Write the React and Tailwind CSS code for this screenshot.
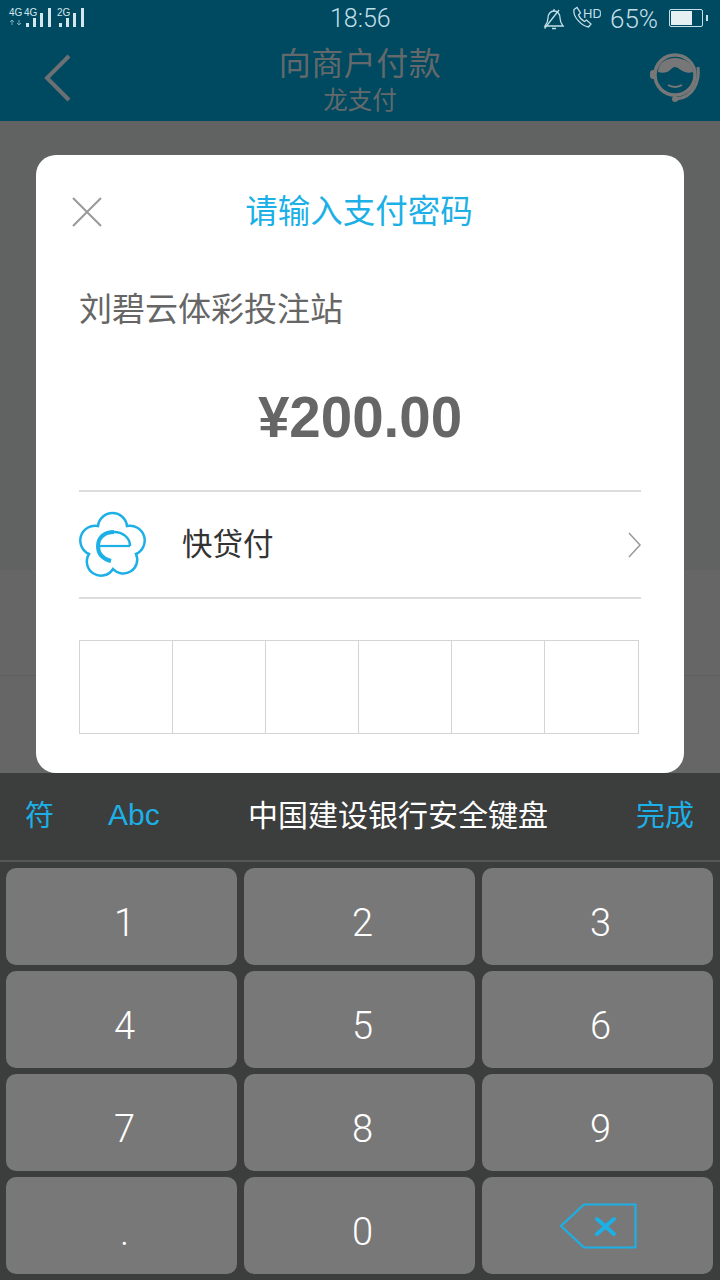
const font = { fontFamily: '"Liberation Sans", "Noto Sans CJK SC", sans-serif' }
const thinFont = { fontFamily: 'Roboto, "Liberation Sans", sans-serif' }

const KEYS = ['1', '2', '3', '4', '5', '6', '7', '8', '9', '.', '0']

function SignalBars({ x }) {
  return (
    <>
      <rect x={x} y="23" width="3" height="4" />
      <rect x={x + 7} y="18" width="3" height="9" />
      <rect x={x + 14} y="13" width="3" height="14" />
      <rect x={x + 22} y="8" width="3" height="19" />
    </>
  )
}

function StatusBar() {
  return (
    <div className="relative h-10 w-full text-[#c3dfe8]">
      <svg className="absolute left-0 top-0" width="90" height="30" fill="#d4e7ed">
        <text x="9" y="16" fontSize="10" fontFamily="Liberation Sans">4G</text>
        <text x="24" y="16" fontSize="10" fontFamily="Liberation Sans">4G</text>
        <path d="M12 25v-5M10 22l2-2 2 2M19 20v5M17 23l2 2 2-2" stroke="#7fa9b8" fill="none" />
        <SignalBars x={26} />
        <text x="57" y="16" fontSize="10" fontFamily="Liberation Sans">2G</text>
        <SignalBars x={59} />
      </svg>
      <span className="absolute left-[330px] top-[5px] text-[25px] font-light leading-7" style={thinFont}>18:56</span>
      <svg className="absolute left-[543px] top-[7px]" width="22" height="23" viewBox="0 0 22 23" fill="none" stroke="#c3dfe8" strokeWidth="1.300">
        <path d="M2 19h18c-2-2.500-3-4-3-8 0-4-2.500-7-6-7-3.500 0-6 3-6 7 0 4-1 5.500-3 8Z" />
        <path d="M9 21.500h4M11 4V2M1.500 21.500 16 3" />
      </svg>
      <svg className="absolute left-[571px] top-[6px]" width="30" height="23" viewBox="0 0 30 23" fill="none" stroke="#c3dfe8" strokeWidth="1.300">
        <path d="M3 3.500 6 1.500l3.500 5.500-2 2c1 2.500 3 5 6 6.500l2-1.500 4.500 4-2.500 3C11 20 1.500 11 3 3.500Z" />
        <text x="12" y="12" fontSize="13" fill="#c3dfe8" stroke="none" fontFamily="Liberation Sans">HD</text>
      </svg>
      <span className="absolute left-[610px] top-[5px] text-[26px] font-light leading-7" style={thinFont}>65%</span>
      <div className="absolute left-[669px] top-[9px] h-[18px] w-[34px] rounded-[2px] border border-[#c3dfe8] p-[1px]">
        <div className="h-full w-[21px] bg-[#e6eff2]" />
      </div>
      <div className="absolute left-[706px] top-[15px] h-[6px] w-[2px] bg-[#c3dfe8]" />
    </div>
  )
}

function Header() {
  return (
    <div className="relative h-[121px] w-full shrink-0 bg-[#004a61]">
      <StatusBar />
      <svg className="absolute left-[42px] top-[53px]" width="30" height="50" fill="none" stroke="#6c7072" strokeWidth="4">
        <path d="M27 3 5 25l22 22" />
      </svg>
      <div className="absolute inset-x-0 top-[44px] flex flex-col items-center text-[#63696b]" style={font}>
        <span className="text-[32px] leading-10 tracking-[0.5px]">向商户付款</span>
        <span className="mt-[3px] text-[24.500px] leading-7">龙支付</span>
      </div>
      <svg className="absolute left-[649px] top-[52px]" width="54" height="52" viewBox="0 0 54 52" fill="none" stroke="#777">
        <circle cx="26" cy="23" r="20" strokeWidth="3.500" />
        <path d="M9 20C9 11 17 6 26 6s18 5 18 14c-3 1-6 1-8 0-4-1-7-5-10-5s-5 4-8 5c-3 1-6 1-9 0Z" fill="#777" stroke="none" />
        <rect x="1" y="18" width="6" height="9" rx="3" fill="#777" stroke="none" />
        <path d="M19 33c4 2.500 10 2.500 14 0" strokeWidth="2" />
        <path d="M49 15c2 15-5 30-21 32" strokeWidth="3" />
        <circle cx="26" cy="47" r="3" fill="#777" stroke="none" />
      </svg>
    </div>
  )
}

function LoanIcon() {
  return (
    <svg width="68" height="66" viewBox="0 0 68 66" fill="none" stroke="#1cb0e6" className="shrink-0 overflow-visible">
      <path
        d="M19 14A14.600 14.600 0 0 1 48 14A14.800 14.800 0 0 1 57 42A13.900 13.900 0 0 1 34 57A13.900 13.900 0 0 1 10 42A14.800 14.800 0 0 1 19 14Z"
        strokeWidth="2.500"
      />
      <path d="M51 34H20" strokeWidth="2.200" />
      <path d="M51 34c0-9-8-14-16-14" strokeWidth="2.500" />
      <path d="M35 20c-9 0-16 5-16 14 0 8 5 13 13 15" strokeWidth="4" />
    </svg>
  )
}

function PayModal() {
  return (
    <div className="absolute left-9 top-[155px] h-[618px] w-[648px] rounded-[20px] bg-white px-[43px]" style={font}>
      <div className="relative flex h-[113px] items-center justify-center pr-[2px] pt-[1px]">
        <svg className="absolute left-[-7px] top-[42px]" width="30" height="30" fill="none" stroke="#999" strokeWidth="2">
          <path d="M1 1l28 28M29 1 1 29" />
        </svg>
        <span className="text-[32.500px] text-[#1cb0e6]">请输入支付密码</span>
      </div>
      <div className="mt-[22px] text-[33px] leading-[40px] text-[#666]">刘碧云体彩投注站</div>
      <div className="mt-[56px] text-center text-[56.500px] font-bold leading-[64px] text-[#666]">¥200.00</div>
      <div className="mt-[40px] flex h-[109px] items-center border-y-2 border-[#dcdcdc]">
        <LoanIcon />
        <span className="ml-[35px] text-[30.500px] text-[#333]">快贷付</span>
        <svg className="ml-auto mr-[-1px]" width="14" height="26" fill="none" stroke="#999" strokeWidth="1.500">
          <path d="M1 1l11 12L1 25" />
        </svg>
      </div>
      <div className="mt-[41px] grid h-[94px] w-[560px] grid-cols-6 border border-[#d4d4d4]">
        {[0, 1, 2, 3, 4, 5].map((i) => (
          <div key={i} className="border-r border-[#d4d4d4] last:border-r-0" />
        ))}
      </div>
    </div>
  )
}

function Keyboard() {
  return (
    <div className="flex h-[507px] w-full shrink-0 flex-col bg-[#3c3d3d]" style={font}>
      <div className="relative flex h-[89px] shrink-0 items-center border-b-2 border-[#565757] text-[#1cb0e6]">
        <span className="absolute left-[25px] text-[29px]">符</span>
        <span className="absolute left-[108px] top-[19px] text-[30px]">Abc</span>
        <span className="ml-[248px] pb-[2px] text-[30px] text-white">中国建设银行安全键盘</span>
        <span className="absolute right-[26px] text-[29px]">完成</span>
      </div>
      <div className="grid grid-cols-[231px_231px_231px] gap-x-[7px] gap-y-[6px] px-[6px] pt-[6px]">
        {KEYS.map((k) => (
          <div
            key={k}
            className="flex h-[97px] items-center justify-center rounded-[10px] bg-[#787878] pl-[6px] pt-[14px] text-[38px] font-[350] text-white"
            style={thinFont}
          >
            {k}
          </div>
        ))}
        <div className="flex h-[97px] items-center justify-center rounded-[10px] bg-[#787878]">
          <svg width="78" height="46" viewBox="0 0 78 46" fill="none" stroke="#1cb0e6">
            <path d="M25 1.500h51.500v43H25L2 23Z" strokeWidth="2.200" />
            <path d="M38 16l17 15M55 16 38 31" strokeWidth="4" strokeLinecap="round" />
          </svg>
        </div>
      </div>
    </div>
  )
}

export default function App() {
  return (
    <div className="relative flex h-[1280px] w-[720px] flex-col overflow-hidden bg-[#666]">
      <Header />
      <div className="flex-1">
        <div className="h-[449px] bg-[#616362]" />
        <div className="mt-[105px] h-[1px] bg-[#5e5e5e]" />
      </div>
      <Keyboard />
      <PayModal />
    </div>
  )
}
